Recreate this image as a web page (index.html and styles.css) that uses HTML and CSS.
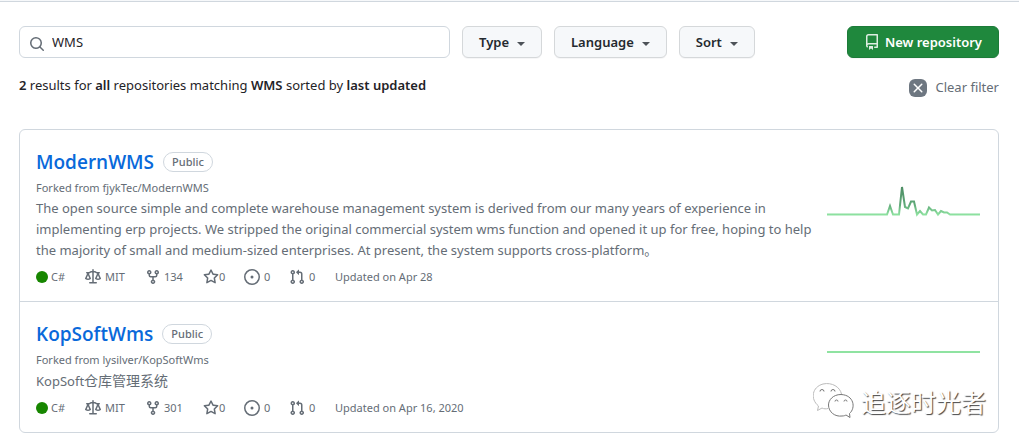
FILE: index.html
```html
<!DOCTYPE html>
<html lang="en">
<head>
<meta charset="utf-8">
<meta name="viewport" content="width=device-width, initial-scale=1">
<title>Repositories</title>
<link rel="stylesheet" href="styles.css">
</head>
<body>
<svg class="sprite" aria-hidden="true">
  <symbol id="law" viewBox="0 0 16 16"><path d="M8.75.75V2h.985c.304 0 .603.08.867.231l1.29.736c.038.022.08.033.124.033h2.234a.75.75 0 0 1 0 1.5h-.427l2.111 4.692a.75.75 0 0 1-.154.838l-.53-.53.529.531-.001.002-.002.002-.006.006-.006.005-.01.01-.045.04c-.21.176-.441.327-.686.45C14.556 10.78 13.88 11 13 11a4.498 4.498 0 0 1-2.023-.454 3.544 3.544 0 0 1-.686-.45l-.045-.04-.016-.015-.006-.006-.004-.004v-.001a.75.75 0 0 1-.154-.838L12.178 4.5h-.162c-.305 0-.604-.079-.868-.231l-1.29-.736a.245.245 0 0 0-.124-.033H8.75V13h2.5a.75.75 0 0 1 0 1.5h-6.5a.75.75 0 0 1 0-1.5h2.5V3.5h-.984a.245.245 0 0 0-.124.033l-1.289.737c-.265.15-.564.23-.869.23h-.162l2.112 4.692a.75.75 0 0 1-.154.838l-.53-.53.529.531-.001.002-.002.002-.006.006-.016.015-.045.04c-.21.176-.441.327-.686.45C4.556 10.78 3.88 11 3 11a4.498 4.498 0 0 1-2.023-.454 3.544 3.544 0 0 1-.686-.45l-.045-.04-.016-.015-.006-.006-.004-.004v-.001a.75.75 0 0 1-.154-.838L2.178 4.5H1.75a.75.75 0 0 1 0-1.5h2.234a.249.249 0 0 0 .125-.033l1.288-.737c.265-.15.564-.23.869-.23h.984V.75a.75.75 0 0 1 1.5 0Zm2.945 8.477c.285.135.718.273 1.305.273s1.02-.138 1.305-.273L13 6.327Zm-10 0c.285.135.718.273 1.305.273s1.02-.138 1.305-.273L3 6.327Z"/></symbol>
  <symbol id="fork" viewBox="0 0 16 16"><path d="M5 5.372v.878c0 .414.336.75.75.75h4.5a.75.75 0 0 0 .75-.75v-.878a2.25 2.25 0 1 1 1.5 0v.878a2.25 2.25 0 0 1-2.25 2.25h-1.5v2.128a2.251 2.251 0 1 1-1.5 0V8.5h-1.5A2.25 2.25 0 0 1 3.5 6.25v-.878a2.25 2.25 0 1 1 1.5 0ZM5 3.25a.75.75 0 1 0-1.5 0 .75.75 0 0 0 1.5 0Zm6.75.75a.75.75 0 1 0 0-1.5.75.75 0 0 0 0 1.5Zm-3 8.75a.75.75 0 1 0-1.5 0 .75.75 0 0 0 1.5 0Z"/></symbol>
  <symbol id="star" viewBox="0 0 16 16"><path d="M8 .25a.75.75 0 0 1 .673.418l1.882 3.815 4.21.612a.75.75 0 0 1 .416 1.279l-3.046 2.97.719 4.192a.751.751 0 0 1-1.088.791L8 12.347l-3.766 1.98a.75.75 0 0 1-1.088-.79l.72-4.194L.818 6.374a.75.75 0 0 1 .416-1.28l4.21-.611L7.327.668A.75.75 0 0 1 8 .25Zm0 2.445L6.615 5.5a.75.75 0 0 1-.564.41l-3.097.45 2.24 2.184a.75.75 0 0 1 .216.664l-.528 3.084 2.769-1.456a.75.75 0 0 1 .698 0l2.77 1.456-.53-3.084a.75.75 0 0 1 .216-.664l2.24-2.183-3.096-.45a.75.75 0 0 1-.564-.41L8 2.694Z"/></symbol>
  <symbol id="issue" viewBox="0 0 16 16"><path d="M8 9.500a1.500 1.500 0 1 0 0-3 1.500 1.500 0 0 0 0 3Z"/><path d="M8 0a8 8 0 1 1 0 16A8 8 0 0 1 8 0ZM1.500 8a6.500 6.500 0 1 0 13 0 6.500 6.500 0 0 0-13 0Z"/></symbol>
  <symbol id="pull" viewBox="0 0 16 16"><path d="M1.500 3.250a2.250 2.250 0 1 1 3 2.122v5.256a2.251 2.251 0 1 1-1.500 0V5.372A2.250 2.250 0 0 1 1.500 3.250Zm5.677-.177L9.573.677A.250.250 0 0 1 10 .854V2.500h1A2.500 2.500 0 0 1 13.500 5v5.628a2.251 2.251 0 1 1-1.500 0V5a1 1 0 0 0-1-1h-1v1.646a.250.250 0 0 1-.427.177L7.177 3.427a.250.250 0 0 1 0-.354ZM3.750 2.500a.750.750 0 1 0 0 1.500.750.750 0 0 0 0-1.500Zm0 9.500a.750.750 0 1 0 0 1.500.750.750 0 0 0 0-1.500Zm8.250.750a.750.750 0 1 0 1.500 0 .750.750 0 0 0-1.500 0Z"/></symbol>
  <symbol id="repo" viewBox="0 0 16 16"><path d="M2 2.500A2.500 2.500 0 0 1 4.500 0h8.750a.750.750 0 0 1 .750.750v12.500a.750.750 0 0 1-.750.750h-2.500a.750.750 0 0 1 0-1.500h1.750v-2h-8a1 1 0 0 0-.714 1.700.750.750 0 1 1-1.072 1.050A2.495 2.495 0 0 1 2 11.500Zm10.500-1h-8a1 1 0 0 0-1 1v6.708A2.486 2.486 0 0 1 4.500 9h8ZM5 12.250a.250.250 0 0 1 .250-.250h3.500a.250.250 0 0 1 .250.250v3.250a.250.250 0 0 1-.400.200l-1.450-1.087a.249.249 0 0 0-.300 0L5.400 15.700a.250.250 0 0 1-.400-.200Z"/></symbol>
  <symbol id="search" viewBox="0 0 16 16"><path d="M10.680 11.740a6 6 0 0 1-7.922-8.982 6 6 0 0 1 8.982 7.922l3.040 3.040a.749.749 0 1 1-1.060 1.060ZM11.500 7a4.499 4.499 0 1 0-8.997 0A4.499 4.499 0 0 0 11.500 7Z"/></symbol>
  <symbol id="x" viewBox="0 0 16 16"><path d="M3.720 3.720a.75.75 0 0 1 1.060 0L8 6.940l3.220-3.220a.75.75 0 1 1 1.060 1.060L9.060 8l3.220 3.220a.75.75 0 1 1-1.060 1.060L8 9.060l-3.220 3.220a.75.75 0 1 1-1.060-1.060L6.940 8 3.720 4.780a.75.75 0 0 1 0-1.060Z"/></symbol>
</svg>

<header class="topbar"></header>

<main class="page">
  <form class="toolbar">
    <label class="search">
      <svg class="icon"><use href="#search"/></svg>
      <input type="text" value="WMS" aria-label="Find a repository">
    </label>
    <button type="button" class="btn">Type <span class="caret"></span></button>
    <button type="button" class="btn">Language <span class="caret"></span></button>
    <button type="button" class="btn">Sort <span class="caret"></span></button>
    <button type="button" class="btn btn-primary"><svg class="icon"><use href="#repo"/></svg>New repository</button>
  </form>

  <div class="summary">
    <p><b>2</b> results for <b>all</b> repositories matching <b>WMS</b> sorted by <b>last updated</b></p>
    <a href="#" class="clear"><span class="clear-box"><svg class="icon"><use href="#x"/></svg></span>Clear filter</a>
  </div>

  <ul class="repos">
    <li class="repo">
      <div class="info">
        <div class="title"><h3><a href="#">ModernWMS</a></h3><span class="tag">Public</span></div>
        <p class="forked">Forked from <a href="#">fjykTec/ModernWMS</a></p>
        <p class="desc">The open source simple and complete warehouse management system is derived from our many years of experience in implementing erp projects. We stripped the original commercial system wms function and opened it up for free, hoping to help the majority of small and medium-sized enterprises. At present, the system supports cross-platform。</p>
        <div class="meta">
          <span class="lang"><i class="dot"></i>C#</span>
          <span class="license"><svg class="icon"><use href="#law"/></svg>MIT</span>
          <a href="#" class="forks"><svg class="icon"><use href="#fork"/></svg>134</a>
          <a href="#" class="stars"><svg class="icon"><use href="#star"/></svg>0</a>
          <a href="#" class="issues"><svg class="icon"><use href="#issue"/></svg>0</a>
          <a href="#" class="pulls"><svg class="icon"><use href="#pull"/></svg>0</a>
          <span>Updated on Apr 28</span>
        </div>
      </div>
      <svg class="spark" viewBox="0 0 153 32" role="img" aria-label="Past year of activity">
        <defs><linearGradient id="activity" gradientUnits="userSpaceOnUse" x1="0" y1="30" x2="0" y2="0">
          <stop offset="0" stop-color="#8fe3a1"/><stop offset=".35" stop-color="#5fa878"/><stop offset="1" stop-color="#4b8a62"/>
        </linearGradient></defs>
        <path stroke="url(#activity)" d="M0 29.500H60L63 21L66 29.500H72L75 2L78 22L81 23.500L84 16.500H87L90 29.500L93 26L96 29.500H99L102 22.500L105 25.500L108 25L111 29.500L114 26L117 27.500H120L123 29.500H153"/>
      </svg>
    </li>
    <li class="repo">
      <div class="info">
        <div class="title"><h3><a href="#">KopSoftWms</a></h3><span class="tag">Public</span></div>
        <p class="forked">Forked from <a href="#">lysilver/KopSoftWms</a></p>
        <p class="desc">KopSoft<span class="cjk" lang="zh">仓库管理系统</span></p>
        <div class="meta">
          <span class="lang"><i class="dot"></i>C#</span>
          <span class="license"><svg class="icon"><use href="#law"/></svg>MIT</span>
          <a href="#" class="forks"><svg class="icon"><use href="#fork"/></svg>301</a>
          <a href="#" class="stars"><svg class="icon"><use href="#star"/></svg>0</a>
          <a href="#" class="issues"><svg class="icon"><use href="#issue"/></svg>0</a>
          <a href="#" class="pulls"><svg class="icon"><use href="#pull"/></svg>0</a>
          <span>Updated on Apr 16, 2020</span>
        </div>
      </div>
      <svg class="spark spark-flat" viewBox="0 0 153 32" role="img" aria-label="Past year of activity">
        <path stroke="#8fe3a1" d="M0 29H153"/>
      </svg>
      <div class="watermark">
        <svg viewBox="0 0 42 36" aria-hidden="true">
          <path class="far" d="M15 25.500C13 26 11 26 9 25L4.500 27.500L5.500 23C-3 16-1 4 10 1C19-1 27 4 28.500 11"/>
          <path d="M28 11.500C20 11.500 15.500 17 15.500 22C15.500 29 22 34 29 33C31 33 32 32.500 33 32L37 34.500L36.500 30.500C43 25 41 12 28 11.500Z"/>
          <path class="eyes" d="M7 8.500a2 2 0 0 1 4 0M18 8.500a2 2 0 0 1 4 0M22 18.500a1.500 1.500 0 0 1 3 0M31 18.500a1.500 1.500 0 0 1 3 0"/>
        </svg>
        <span lang="zh">追逐时光者</span>
      </div>
    </li>
  </ul>
</main>
</body>
</html>
```
FILE: styles.css
```css
* { box-sizing: border-box; }
body {
  margin: 0;
  background: #fff;
  color: #1f2328;
  font: 13px/21px "Noto Sans", "Noto Sans CJK SC", sans-serif;
}
h3, p, ul { margin: 0; padding: 0; }
a { color: inherit; text-decoration: none; }
b { font-weight: 600; }
.sprite { display: none; }
.icon { width: 16px; height: 16px; fill: currentColor; flex: none; }

.topbar { height: 2px; background: #f6f8fa; border-bottom: 1px solid #d0d7de; }
.page { padding: 24px 20px 14px 19px; }

.toolbar { display: flex; gap: 12px; }
.search {
  flex: 0 1 431px;
  height: 32px;
  display: flex;
  align-items: center;
  gap: 7px;
  padding: 0 9px;
  border: 1px solid #d0d7de;
  border-radius: 6px;
}
.search .icon { color: #656d76; margin-top: 3px; }
.search input {
  flex: 1;
  min-width: 0;
  border: 0;
  padding: 0;
  outline: 0;
  background: none;
  color: inherit;
  font: inherit;
}
.btn {
  height: 32px;
  display: flex;
  align-items: center;
  padding: 0 16px;
  border: 1px solid #d5d8da;
  border-radius: 6px;
  background: #f6f8fa;
  box-shadow: 0 1px 0 rgba(31, 35, 40, .04);
  color: #24292f;
  font: inherit;
  font-weight: 600;
  white-space: nowrap;
}
.caret {
  margin: 3px 0 0 8px;
  border: 4px solid transparent;
  border-top-color: #4d5258;
  border-bottom: 0;
}
.btn-primary {
  margin-left: auto;
  gap: 5px;
  background: #1f883d;
  border-color: #1d7b39;
  color: #fff;
}
.btn-primary .icon { opacity: .85; }

.summary { display: flex; justify-content: space-between; padding-top: 17px; }
.clear { display: flex; align-items: center; gap: 8px; color: #656d76; margin-top: 2px; }
.clear-box {
  width: 18px;
  height: 18px;
  display: grid;
  place-items: center;
  border-radius: 6px;
  background: #6e7781;
  color: #fff;
}

.repos {
  margin-top: 31px;
  list-style: none;
  border: 1px solid #d0d7de;
  border-radius: 6px;
}
.repo {
  position: relative;
  display: flex;
  justify-content: space-between;
  padding: 17px 18px 14px 16px;
}
.repo + .repo { border-top: 1px solid #d0d7de; }
.info { flex: 1; min-width: 0; color: #656d76; }
.title { display: flex; align-items: center; gap: 9px; height: 30px; }
.title h3 {
  font-family: "Open Sans", sans-serif;
  font-size: 19px;
  line-height: 30px;
  font-weight: 600;
  color: #0969da;
}
.tag {
  height: 20px;
  padding: 0 8px;
  border: 1px solid #d0d7de;
  border-radius: 10px;
  font-size: 11px;
  line-height: 18px;
  font-weight: 500;
}
.forked { margin-top: 1px; font-size: 11px; line-height: 20px; }
.desc { padding-right: 4px; }
.cjk { font-size: 14px; }
.meta { display: flex; align-items: center; margin-top: 6px; font-size: 11px; line-height: 20px; }
.meta > * { display: flex; align-items: center; }
.lang { width: 49px; gap: 3px; }
.dot { width: 12px; height: 12px; border-radius: 50%; background: #178600; }
.license { width: 60px; gap: 4px; }
.forks { width: 58px; gap: 3px; }
.stars { width: 41px; }
.issues { width: 45px; gap: 4px; }
.pulls { width: 46px; gap: 4px; }

.spark {
  flex: none;
  width: 153px;
  height: 32px;
  margin-top: 38px;
  fill: none;
  stroke-width: 2;
}
.spark-flat { margin-top: 4px; }

.watermark {
  position: absolute;
  right: 12px;
  bottom: 13px;
  display: flex;
  align-items: center;
  gap: 6px;
  color: #fff;
  font: 25px/36px "Noto Sans CJK SC", sans-serif;
  text-shadow: 1px 1px 1px #444;
}
.watermark svg { width: 42px; height: 36px; fill: #fff; stroke: #777; stroke-width: 1; }
.watermark .far { stroke: #bbb; }
.watermark .eyes { fill: none; }
```
